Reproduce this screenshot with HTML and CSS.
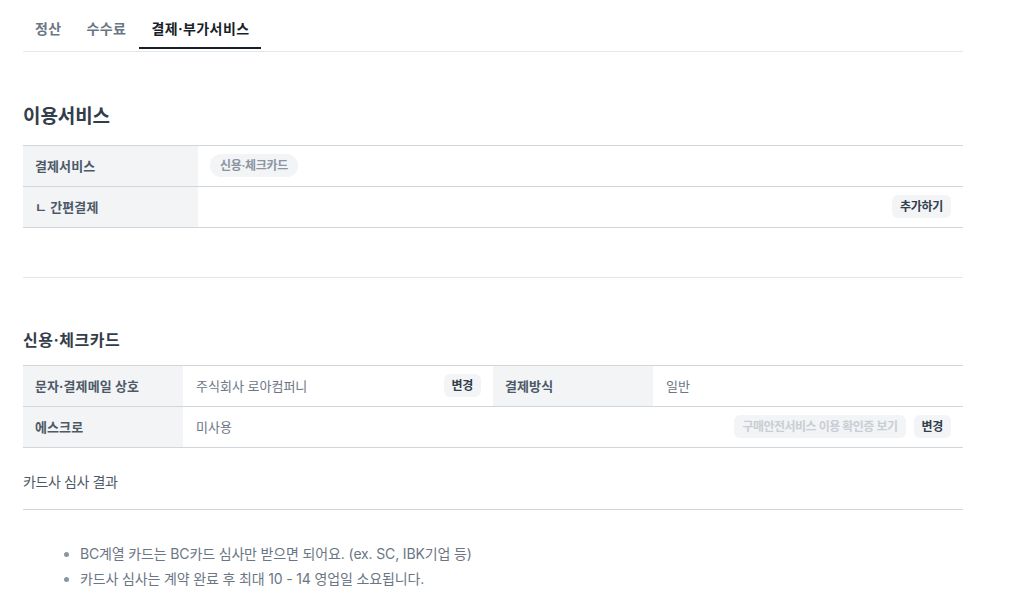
FILE: index.html
```html
<!DOCTYPE html>
<html lang="ko">
<head>
<meta charset="utf-8">
<link rel="stylesheet" href="styles.css">
</head>
<body>
<div class="page">
  <nav class="tabs">
    <span class="tab">정산</span>
    <span class="tab">수수료</span>
    <span class="tab active">결제·부가서비스</span>
  </nav>

  <h2 class="h-lg">이용서비스</h2>
  <div class="table t1">
    <div class="row">
      <div class="label">결제서비스</div>
      <div class="value"><span class="chip">신용·체크카드</span></div>
    </div>
    <div class="row">
      <div class="label">ㄴ 간편결제</div>
      <div class="value end"><button class="btn">추가하기</button></div>
    </div>
  </div>

  <hr class="divider">

  <h3 class="h-md">신용·체크카드</h3>
  <div class="table t2">
    <div class="row">
      <div class="label">문자·결제메일 상호</div>
      <div class="value split"><span class="text">주식회사 로아컴퍼니</span><button class="btn">변경</button></div>
      <div class="label">결제방식</div>
      <div class="value"><span class="text">일반</span></div>
    </div>
    <div class="row">
      <div class="label">에스크로</div>
      <div class="value wide split"><span class="text">미사용</span><span class="btns"><button class="btn disabled">구매안전서비스 이용 확인증 보기</button><button class="btn">변경</button></span></div>
    </div>
  </div>

  <div class="review">카드사 심사 결과</div>

  <ul class="notes">
    <li>BC계열 카드는 BC카드 심사만 받으면 되어요. (ex. SC, IBK기업 등)</li>
    <li>카드사 심사는 계약 완료 후 최대 10 - 14 영업일 소요됩니다.</li>
  </ul>
</div>
</body>
</html>
```

FILE: styles.css
```css
* { box-sizing: border-box; }
body {
  margin: 0;
  background: #fff;
  font-family: "Inter", "Noto Sans CJK KR", sans-serif;
  color: #333d4b;
}
.page {
  width: 940px;
  margin-left: 23px;
}
.tabs {
  display: flex;
  gap: 1px;
  padding-top: 9px;
  padding-bottom: 2px;
  border-bottom: 1px solid #e5e8eb;
}
.tab {
  padding: 10px 12px 8px;
  line-height: 20px;
  font-size: 14px;
  font-weight: 600;
  letter-spacing: 0.4px;
  color: #6b7684;
  border-bottom: 2px solid transparent;
}
.tab.active {
  color: #191f28;
  font-weight: 700;
  border-bottom-color: #191f28;
}
.h-lg {
  margin: 52px 0 0;
  font-size: 19px;
  line-height: 26px;
  font-weight: 700;
  letter-spacing: -0.1px;
  color: #333d4b;
}
.h-md {
  margin: 50px 0 0;
  font-size: 16px;
  line-height: 24px;
  font-weight: 700;
  letter-spacing: 0.5px;
  color: #333d4b;
}
.table {
  border-top: 1px solid #d1d6db;
}
.t1 { margin-top: 15px; }
.t2 { margin-top: 13px; }
.row {
  display: grid;
  height: 41px;
  border-bottom: 1px solid #d1d6db;
}
.t1 .row { grid-template-columns: 175px 1fr; }
.t2 .row { grid-template-columns: 160px 310px 160px 1fr; }
.t2 .value.wide { grid-column: 2 / 5; }
.label {
  background: #f2f4f6;
  display: flex;
  align-items: center;
  padding: 0 0 2px 12px;
  font-size: 13px;
  font-weight: 700;
  letter-spacing: 0.1px;
  color: #4e5968;
}
.value {
  display: flex;
  align-items: center;
  padding: 0 12px 2px 12px;
  font-size: 13px;
  color: #6b7684;
}
.t2 .value { padding-left: 13px; }
.value.split { justify-content: space-between; }
.value.end { justify-content: flex-end; }
.text { letter-spacing: 0; }
.divider {
  margin: 49px 0 0;
  border: 0;
  border-top: 1px solid #e5e8eb;
  height: 0;
}
.chip {
  display: inline-flex;
  align-items: center;
  height: 23px;
  padding: 0 10px 1px;
  border-radius: 12px;
  background: #f2f4f6;
  color: #8b95a1;
  font-size: 12px;
  font-weight: 600;
  letter-spacing: -0.3px;
}
.btns { display: flex; gap: 8px; }
.btn {
  height: 23px;
  padding: 0 8px 1px;
  border: 0;
  border-radius: 6px;
  background: #f2f4f6;
  color: #333d4b;
  font-family: inherit;
  font-size: 12px;
  font-weight: 700;
  letter-spacing: -0.3px;
}
.btn.disabled {
  color: #c9ced4;
  font-weight: 600;
  letter-spacing: -0.5px;
}
.review {
  margin-top: 24px;
  font-size: 14px;
  line-height: 20px;
  letter-spacing: -0.4px;
  color: #4e5968;
  padding-bottom: 17px;
  border-bottom: 1px solid #d1d6db;
}
.notes {
  margin: 31px 0 0;
  padding-left: 57px;
  font-size: 14px;
  line-height: 25px;
  letter-spacing: -0.15px;
  color: #6b7684;
}
.notes li::marker { color: #8b95a1; }
```
